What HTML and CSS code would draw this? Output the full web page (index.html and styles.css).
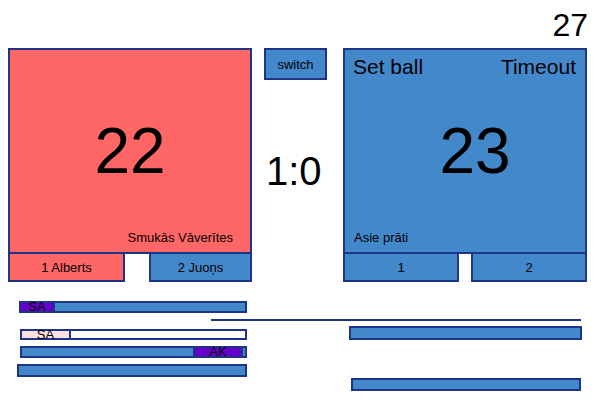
FILE: index.html
```html
<!DOCTYPE html>
<html>
<head>
<meta charset="utf-8">
<link rel="stylesheet" href="styles.css">
</head>
<body>
<div class="clock">27</div>
<div class="main">
  <div class="team">
    <div class="box red">
      <div class="score">22</div>
      <div class="name name-right">Smukās Vāverītes</div>
    </div>
    <div class="players">
      <div class="player red p-left-a">1 Alberts</div>
      <div class="player blue p-left-b">2 Juoņs</div>
    </div>
  </div>
  <div class="middle">
    <div class="switch">switch</div>
    <div class="sets">1:0</div>
  </div>
  <div class="team">
    <div class="box blue">
      <div class="top"><span>Set ball</span><span>Timeout</span></div>
      <div class="score score-right">23</div>
      <div class="name name-left">Asie prāti</div>
    </div>
    <div class="players">
      <div class="player blue p-right">1</div>
      <div class="player blue p-right">2</div>
    </div>
  </div>
</div>
<div class="timeline">
  <div class="bar" style="left:19px;top:19px;width:228px;height:12px">
    <div class="seg purple" style="width:32px">SA</div>
    <div class="seg blue fill"></div>
  </div>
  <div class="line" style="left:211px;top:37px;width:370px"></div>
  <div class="bar" style="left:20px;top:47px;width:227px;height:11px">
    <div class="seg pink" style="width:47px">SA</div>
    <div class="seg white fill"></div>
  </div>
  <div class="bar" style="left:20px;top:64px;width:227px;height:12px">
    <div class="seg blue fill"></div>
    <div class="seg purple" style="width:46px">AK</div>
    <div class="seg blue" style="width:2px"></div>
  </div>
  <div class="bar" style="left:17px;top:82px;width:230px;height:13px">
    <div class="seg blue fill"></div>
  </div>
  <div class="bar" style="left:349px;top:44px;width:233px;height:14px">
    <div class="seg blue fill"></div>
  </div>
  <div class="bar" style="left:351px;top:96px;width:230px;height:13px">
    <div class="seg blue fill"></div>
  </div>
</div>
</body>
</html>
```
FILE: styles.css
```css
* { box-sizing: border-box; }
body {
  margin: 0;
  font-family: "Liberation Sans", Arial, sans-serif;
  color: #000;
  background: #fff;
  width: 600px;
  height: 400px;
  overflow: hidden;
}
.red { background: #ff6666; }
.blue { background: #4488cc; }
.purple { background: #6600cc; }
.pink { background: #ffe0e0; }
.white { background: #fff; }

.clock {
  height: 48px;
  padding: 9px 12px 0 0;
  text-align: right;
  font-size: 32px;
  line-height: 32px;
}
.main {
  display: flex;
  padding-left: 8px;
}
.team { width: 244px; }
.box {
  height: 206px;
  border: 2px solid #1e3486;
  display: grid;
}
.box > * { grid-area: 1 / 1; }
.score {
  align-self: center;
  justify-self: center;
  font-size: 64px;
  line-height: 74px;
}
.score-right { margin-left: 20px; }
.top {
  align-self: start;
  display: flex;
  justify-content: space-between;
  padding: 5px 9px 0 8px;
  font-size: 21px;
  line-height: 24px;
}
.name {
  align-self: end;
  font-size: 13px;
  line-height: 15px;
  padding-bottom: 7px;
}
.name-right { justify-self: end; padding-right: 17px; }
.name-left { justify-self: start; padding-left: 9px; }

.players {
  display: flex;
  justify-content: space-between;
}
.player {
  height: 28px;
  border: 2px solid #1e3486;
  border-top: 0;
  font-size: 13px;
  display: flex;
  align-items: center;
  justify-content: center;
}
.p-left-a { width: 117px; }
.p-left-b { width: 103px; }
.p-right { width: 116px; }

.middle {
  width: 91px;
  display: flex;
  flex-direction: column;
  align-items: flex-start;
  padding-left: 12px;
}
.switch {
  width: 63px;
  height: 32px;
  border: 2px solid #1e3486;
  background: #4488cc;
  font-size: 13px;
  display: flex;
  align-items: center;
  justify-content: center;
}
.sets {
  margin: 68px 0 0 2px;
  font-size: 40px;
  line-height: 46px;
}

.timeline {
  position: relative;
  height: 118px;
}
.bar {
  position: absolute;
  display: flex;
  gap: 2px;
  padding: 2px;
  background: #1e3486;
}
.seg {
  font-size: 13px;
  line-height: 8px;
  text-align: center;
  display: flex;
  align-items: center;
  justify-content: center;
  white-space: nowrap;
}
.fill { flex: 1; }
.line {
  position: absolute;
  height: 2px;
  background: #1e3486;
}
```
